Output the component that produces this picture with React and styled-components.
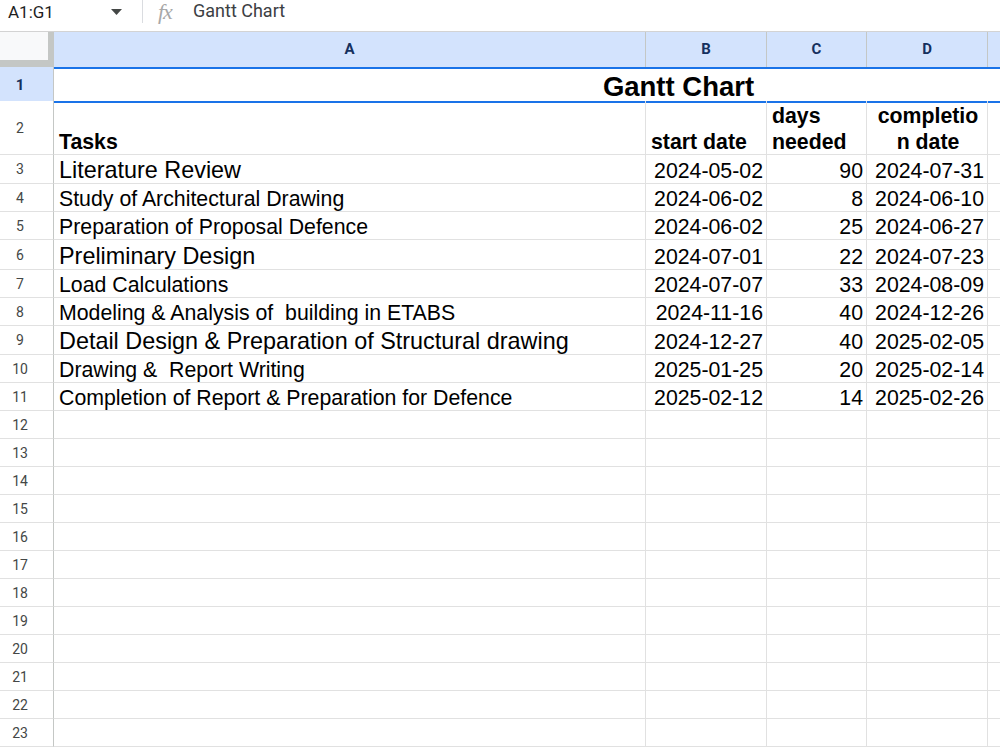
import React from 'react'
import styled, { createGlobalStyle, css } from 'styled-components'

const COLS = '54px 592px 121px 100px 121px 105px 105px 105px'
const LETTERS = ['A', 'B', 'C', 'D', '', '', '']

const tasks = [
  { task: 'Literature Review', lg: true, start: '2024-05-02', days: '90', end: '2024-07-31', h: 29 },
  { task: 'Study of Architectural Drawing', start: '2024-06-02', days: '8', end: '2024-06-10', h: 28 },
  { task: 'Preparation of Proposal Defence', start: '2024-06-02', days: '25', end: '2024-06-27', h: 28 },
  { task: 'Preliminary Design', lg: true, start: '2024-07-01', days: '22', end: '2024-07-23', h: 30 },
  { task: 'Load Calculations', start: '2024-07-07', days: '33', end: '2024-08-09', h: 28 },
  { task: 'Modeling & Analysis of  building in ETABS', start: '2024-11-16', days: '40', end: '2024-12-26', h: 28 },
  { task: 'Detail Design & Preparation of Structural drawing', lg: true, start: '2024-12-27', days: '40', end: '2025-02-05', h: 29 },
  { task: 'Drawing &  Report Writing', start: '2025-01-25', days: '20', end: '2025-02-14', h: 28 },
  { task: 'Completion of Report & Preparation for Defence', start: '2025-02-12', days: '14', end: '2025-02-26', h: 28 },
]

const emptyRows = Array.from({ length: 12 }, (_, i) => i + 12)

const GlobalStyle = createGlobalStyle`
  html, body {
    margin: 0;
    padding: 0;
    background: #fff;
  }
  body {
    font-family: 'Liberation Sans', Arial, sans-serif;
    overflow: hidden;
  }
`

const Page = styled.div`
  width: 1000px;
  height: 750px;
  overflow: hidden;
  background: #fff;
`

const FormulaBar = styled.div`
  display: flex;
  align-items: flex-start;
  height: 32px;
  box-sizing: border-box;
  border-bottom: 1px solid #d3d3d3;
  font-family: Roboto, 'Liberation Sans', sans-serif;
`

const NameBox = styled.div`
  width: 143px;
  height: 23px;
  box-sizing: border-box;
  display: flex;
  align-items: center;
  justify-content: space-between;
  padding: 0 20px 0 8px;
  border-right: 1px solid #dadce0;
  font-size: 17px;
  color: #1f1f1f;
`

const Fx = styled.span`
  margin-left: 15px;
  width: 35px;
  height: 24px;
  display: flex;
  align-items: center;
  font-family: 'Liberation Serif', serif;
  font-style: italic;
  font-size: 22px;
  line-height: 24px;
  letter-spacing: -1px;
  color: #a8a8a8;
`

const FormulaText = styled.span`
  height: 21px;
  display: flex;
  align-items: center;
  font-size: 18px;
  color: #3c4043;
`

const Row = styled.div`
  display: grid;
  grid-template-columns: ${COLS};
  height: ${({ $h }) => $h}px;
`

const Corner = styled.div`
  box-sizing: border-box;
  background: #f8f9fa;
  border-right: 6px solid #c4c7c5;
  border-bottom: 7px solid #c4c7c5;
`

const ColHead = styled.div`
  box-sizing: border-box;
  display: flex;
  align-items: center;
  justify-content: center;
  padding-bottom: 2px;
  background: #d3e3fd;
  border-right: 1px solid #c4c7c5;
  font-family: Roboto, 'Liberation Sans', sans-serif;
  font-weight: 700;
  font-size: 15px;
  color: #15305e;
`

const RowNum = styled.div`
  box-sizing: border-box;
  display: flex;
  align-items: center;
  justify-content: center;
  padding-right: 13px;
  background: #fff;
  border-right: 1px solid #c4c7c5;
  border-bottom: 1px solid #e1e1e1;
  font-family: Roboto, 'Liberation Sans', sans-serif;
  font-size: 14px;
  color: #444746;
  ${({ $selected }) =>
    $selected &&
    css`
      background: #d3e3fd;
      font-weight: 700;
      font-size: 15px;
      color: #15305e;
    `}
`

const Cell = styled.div`
  box-sizing: border-box;
  display: flex;
  align-items: flex-end;
  justify-content: ${({ $align }) =>
    $align === 'right' ? 'flex-end' : $align === 'center' ? 'center' : 'flex-start'};
  text-align: ${({ $align }) => $align || 'left'};
  padding: 0 3px 0 5px;
  border-right: 1px solid #e1e1e1;
  border-bottom: 1px solid #e1e1e1;
  overflow: hidden;
  white-space: pre-wrap;
  color: #000;
  font-size: ${({ $lg }) => ($lg ? '23.4px' : '21.3px')};
  line-height: 1.07;
`

const HeadText = styled.span`
  display: block;
  margin-bottom: -1px;
  font-weight: 700;
  line-height: 26px;
`

const TitleCell = styled.div`
  grid-column: 2 / span 7;
  box-sizing: border-box;
  display: flex;
  align-items: flex-start;
  justify-content: center;
  padding-top: 4px;
  border-top: 2px solid #1a73e8;
  border-bottom: 2px solid #1a73e8;
  font-size: 27.5px;
  line-height: 28px;
  font-weight: 700;
  color: #000;
  white-space: nowrap;
`

const Caret = () => (
  <svg width='11' height='6' viewBox='0 0 11 6'>
    <path d='M0 0h11L5.5 6z' fill='#444746' />
  </svg>
)

const Empty = ({ n }) =>
  Array.from({ length: n }, (_, i) => <Cell key={i} />)

const App = () => {
  return (
    <Page>
      <GlobalStyle />
      <FormulaBar>
        <NameBox>
          <span>A1:G1</span>
          <Caret />
        </NameBox>
        <Fx>fx</Fx>
        <FormulaText>Gantt Chart</FormulaText>
      </FormulaBar>

      <Row $h={35}>
        <Corner />
        {LETTERS.map((l, i) => (
          <ColHead key={i}>{l}</ColHead>
        ))}
      </Row>

      <Row $h={34}>
        <RowNum $selected>1</RowNum>
        <TitleCell>Gantt Chart</TitleCell>
      </Row>

      <Row $h={54}>
        <RowNum>2</RowNum>
        <Cell>
          <HeadText>Tasks</HeadText>
        </Cell>
        <Cell>
          <HeadText>start date</HeadText>
        </Cell>
        <Cell>
          <HeadText>days needed</HeadText>
        </Cell>
        <Cell $align='center'>
          <HeadText>
            completio
            <br />n date
          </HeadText>
        </Cell>
        <Empty n={3} />
      </Row>

      {tasks.map((t, i) => (
        <Row key={t.task} $h={t.h}>
          <RowNum>{i + 3}</RowNum>
          <Cell $lg={t.lg}>{t.task}</Cell>
          <Cell $align='right'>{t.start}</Cell>
          <Cell $align='right'>{t.days}</Cell>
          <Cell $align='right'>{t.end}</Cell>
          <Empty n={3} />
        </Row>
      ))}

      {emptyRows.map((n) => (
        <Row key={n} $h={28}>
          <RowNum>{n}</RowNum>
          <Empty n={7} />
        </Row>
      ))}
    </Page>
  )
}

export default App
